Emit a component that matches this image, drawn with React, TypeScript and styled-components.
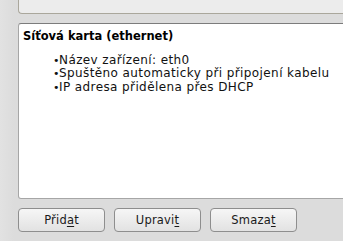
import styled, { createGlobalStyle } from 'styled-components'

const GlobalStyle = createGlobalStyle`
  html, body {
    margin: 0;
    padding: 0;
    background: #dcdcdc;
    overflow: hidden;
  }
  body {
    font-family: 'DejaVu Sans', 'Liberation Sans', sans-serif;
    font-size: 11px;
    color: #1a1a1a;
  }
`

const Page = styled.div`
  width: 343px;
  height: 241px;
  padding-left: 18px;
  box-sizing: border-box;
  background: linear-gradient(to right, #e2e2e2 0px, #dcdcdc 14px);
  display: flex;
  flex-direction: column;
`

const TopPanel = styled.div`
  height: 14px;
  margin-right: -10px;
  box-sizing: border-box;
  background: #ececec;
  border-left: 1px solid #aaa79c;
  border-bottom: 1px solid #aaa79c;
  border-bottom-left-radius: 4px;
`

const InfoBox = styled.div`
  margin-top: 9px;
  height: 176px;
  margin-right: -10px;
  box-sizing: border-box;
  background: #ffffff;
  border: 1px solid #a6a6a6;
  border-top-color: #7c7c7c;
  border-radius: 3px;
  padding: 5px 4px;
`

const Title = styled.div`
  font-weight: bold;
  font-size: 11.5px;
  line-height: 14px;
  color: #000;
`

const List = styled.ul`
  list-style: none;
  margin: 11px 0 0 0;
  padding: 0 0 0 30px;
`

const Item = styled.li`
  display: flex;
  line-height: 13.4px;
  font-size: 12px;
  letter-spacing: 0.4px;
  color: #111;
`

const Bullet = styled.span`
  width: 4px;
  margin-right: 2px;
  flex-shrink: 0;
  font-size: 11px;
  letter-spacing: 0;
`

const ButtonRow = styled.div`
  display: flex;
  gap: 9px;
  margin-top: 9px;
`

const Button = styled.button`
  width: 87px;
  height: 24px;
  box-sizing: border-box;
  border: 1px solid #8e8e8e;
  border-radius: 4px;
  background: linear-gradient(to bottom, #f6f6f6, #e2e2e2);
  font-family: 'DejaVu Sans', 'Liberation Sans', sans-serif;
  font-size: 11.5px;
  letter-spacing: 0.2px;
  color: #1a1a1a;
  padding: 0;
  display: flex;
  align-items: center;
  justify-content: center;
`

const Key = styled.span`
  text-decoration: underline;
  text-underline-offset: 2px;
`

const items = [
  'Název zařízení: eth0',
  'Spuštěno automaticky při připojení kabelu',
  'IP adresa přidělena přes DHCP',
]

const App = () => {
  return (
    <Page>
      <GlobalStyle />
      <TopPanel />
      <InfoBox>
        <Title>Síťová karta (ethernet)</Title>
        <List>
          {items.map((text) => (
            <Item key={text}>
              <Bullet>•</Bullet>
              {text}
            </Item>
          ))}
        </List>
      </InfoBox>
      <ButtonRow>
        <Button>
          Přid<Key>a</Key>t
        </Button>
        <Button>
          Upravi<Key>t</Key>
        </Button>
        <Button>
          Smaza<Key>t</Key>
        </Button>
      </ButtonRow>
    </Page>
  )
}

export default App
